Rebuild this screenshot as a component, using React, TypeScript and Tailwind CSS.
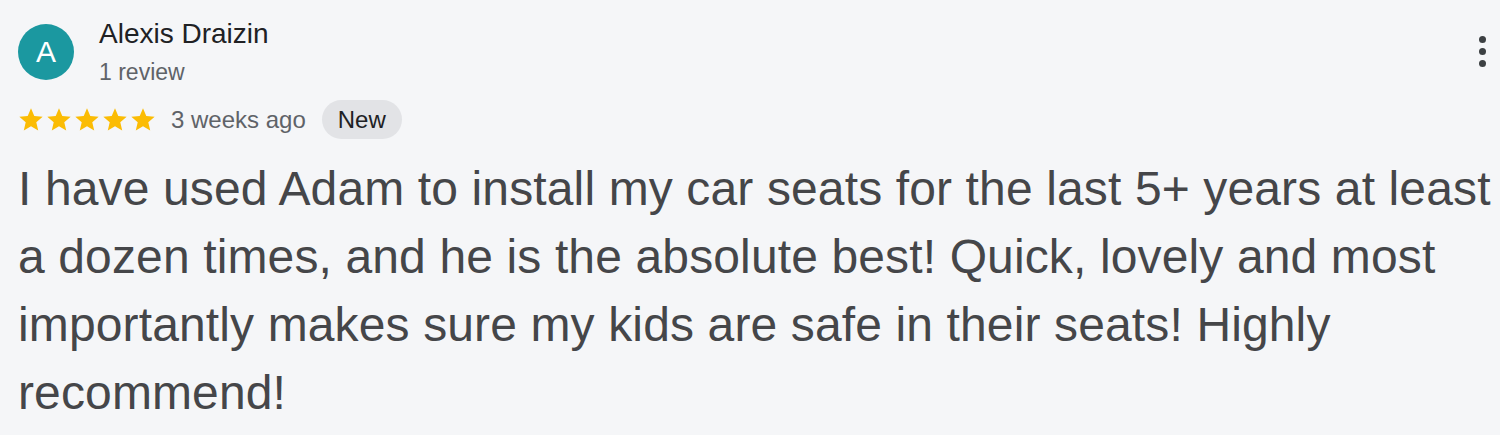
const text =
  'I have used Adam to install my car seats for the last 5+ years at least a dozen times, and he is the absolute best! Quick, lovely and most importantly makes sure my kids are safe in their seats! Highly recommend!'

function Star() {
  return (
    <svg viewBox="0 0 24 24" className="w-[28px] h-[28px]" fill="#fbbc04">
      <path d="M12 17.27L18.18 21l-1.64-7.03L22 9.24l-7.19-.61L12 2 9.19 8.63 2 9.24l5.46 4.73L5.82 21z" />
    </svg>
  )
}

export default function App() {
  return (
    <div
      className="w-[1500px] h-[435px] bg-[#f5f6f8] overflow-hidden pl-[18px] pr-[4px] pt-[17px]"
      style={{ fontFamily: '"Liberation Sans", Arial, sans-serif' }}
    >
      {/* Header */}
      <div className="flex items-start justify-between">
        <div className="flex items-start gap-[25px]">
          <div className="mt-[7px] w-[56px] h-[56px] rounded-full bg-[#1b98a0] flex items-center justify-center text-white text-[30px] leading-none">
            A
          </div>
          <div>
            <p className="text-[28px] leading-[34px] text-[#202124]">Alexis Draizin</p>
            <p className="mt-[6px] text-[23px] leading-[30px] text-[#5f6368]">1 review</p>
          </div>
        </div>
        <div className="flex flex-col gap-[5px] pt-[19px] pr-[10px]">
          <span className="w-[7px] h-[7px] rounded-full bg-[#3c4043]" />
          <span className="w-[7px] h-[7px] rounded-full bg-[#3c4043]" />
          <span className="w-[7px] h-[7px] rounded-full bg-[#3c4043]" />
        </div>
      </div>

      {/* Rating row */}
      <div className="flex items-center mt-[13px]">
        <div className="flex items-center -ml-[1px]">
          <Star />
          <Star />
          <Star />
          <Star />
          <Star />
        </div>
        <span className="ml-[14px] text-[24px] text-[#5f6368]">3 weeks ago</span>
        <span className="ml-[16px] h-[39px] px-[16px] rounded-full bg-[#e2e3e6] text-[24px] text-[#202124] flex items-center">
          New
        </span>
      </div>

      {/* Body */}
      <p className="mt-[16px] text-[48px] leading-[68px] tracking-[0.13px] text-[#454649]">{text}</p>
    </div>
  )
}
